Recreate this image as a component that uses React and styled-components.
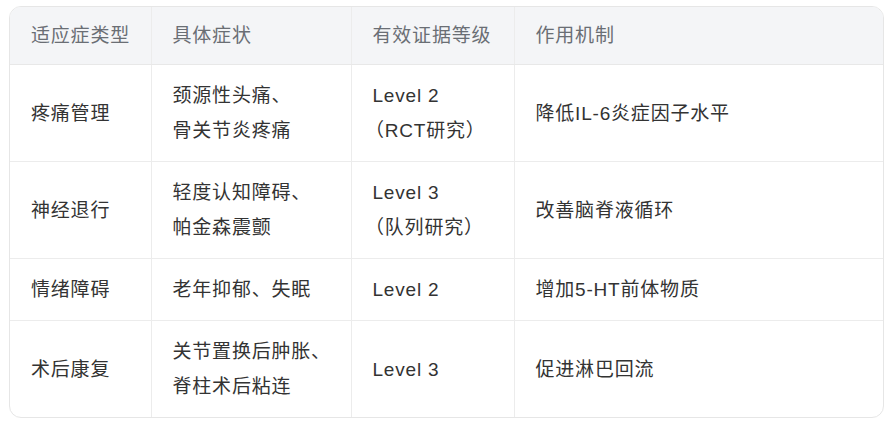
import styled, { createGlobalStyle } from 'styled-components';

const GlobalStyle = createGlobalStyle`
  body {
    margin: 0;
    background: #ffffff;
    font-family: "Liberation Sans", "Noto Sans CJK SC", sans-serif;
  }
`;

const Page = styled.div`
  padding: 6px 7px 7px 9px;
`;

const TableFrame = styled.div`
  border: 1px solid #e6e6e6;
  border-radius: 12px;
  overflow: hidden;
`;

const Table = styled.table`
  width: 100%;
  border-collapse: collapse;
  table-layout: fixed;
`;

const HeadCell = styled.th`
  background: #f4f5f7;
  color: #6a6e74;
  font-size: 19px;
  font-weight: 400;
  letter-spacing: 0.8px;
  line-height: 35px;
  text-align: left;
  white-space: nowrap;
  padding: 11px 21px;
  border-bottom: 1px solid #e8e8e8;
  border-right: 1px solid #ececec;

  &:last-child {
    border-right: none;
  }
`;

const Row = styled.tr`
  &:not(:last-child) td {
    border-bottom: 1px solid #ececec;
  }
`;

const Cell = styled.td`
  color: #333333;
  font-size: 19px;
  letter-spacing: 0.8px;
  line-height: 35px;
  padding: 13px 21px;
  vertical-align: middle;
  border-right: 1px solid #ececec;
  white-space: nowrap;

  &:last-child {
    border-right: none;
  }
`;

const Note = styled.span`
  display: inline-block;
  margin-left: 2px;
  font-feature-settings: "halt";
`;

const rows = [
  { type: '疼痛管理', symptoms: ['颈源性头痛、', '骨关节炎疼痛'], level: 'Level 2', note: '（RCT研究）', mechanism: '降低IL-6炎症因子水平' },
  { type: '神经退行', symptoms: ['轻度认知障碍、', '帕金森震颤'], level: 'Level 3', note: '（队列研究）', mechanism: '改善脑脊液循环' },
  { type: '情绪障碍', symptoms: ['老年抑郁、失眠'], level: 'Level 2', mechanism: '增加5-HT前体物质' },
  { type: '术后康复', symptoms: ['关节置换后肿胀、', '脊柱术后粘连'], level: 'Level 3', mechanism: '促进淋巴回流' },
];

export default function App() {
  return (
    <Page>
      <GlobalStyle />
      <TableFrame>
        <Table>
          <colgroup>
            <col style={{ width: 141 }} />
            <col style={{ width: 200 }} />
            <col style={{ width: 163 }} />
            <col />
          </colgroup>
          <thead>
            <tr>
              <HeadCell>适应症类型</HeadCell>
              <HeadCell>具体症状</HeadCell>
              <HeadCell>有效证据等级</HeadCell>
              <HeadCell>作用机制</HeadCell>
            </tr>
          </thead>
          <tbody>
            {rows.map((r) => (
              <Row key={r.type}>
                <Cell>{r.type}</Cell>
                <Cell>
                  {r.symptoms.map((s, i) => (
                    <span key={s}>
                      {i > 0 && <br />}
                      {s}
                    </span>
                  ))}
                </Cell>
                <Cell>
                  {r.level}
                  {r.note && (
                    <>
                      <br />
                      <Note>{r.note}</Note>
                    </>
                  )}
                </Cell>
                <Cell>{r.mechanism}</Cell>
              </Row>
            ))}
          </tbody>
        </Table>
      </TableFrame>
    </Page>
  );
}
